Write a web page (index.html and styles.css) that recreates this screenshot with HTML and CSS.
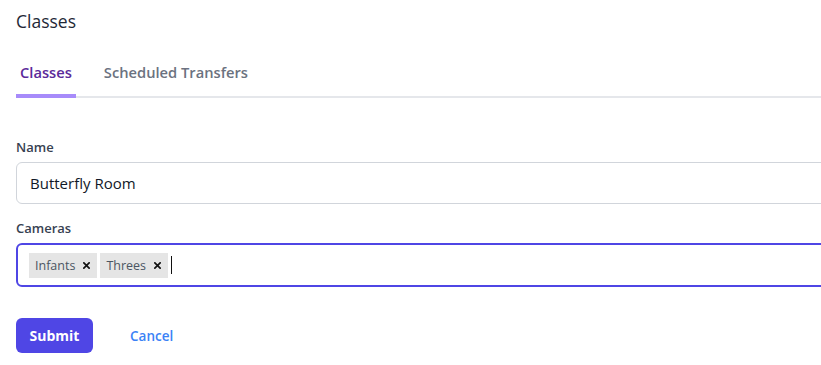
FILE: index.html
```html
<!DOCTYPE html>
<html>
<head>
<meta charset="utf-8">
<link rel="stylesheet" href="styles.css">
</head>
<body>
<div class="page">
  <h1 class="title">Classes</h1>
  <nav class="tabs">
    <a class="tab active">Classes</a>
    <a class="tab">Scheduled Transfers</a>
  </nav>
  <form class="form">
    <div class="field">
      <label class="label">Name</label>
      <div class="input">Butterfly Room</div>
    </div>
    <div class="field">
      <label class="label">Cameras</label>
      <div class="input multi">
        <span class="chip">Infants <svg class="x" viewBox="0 0 8 8" width="8" height="8"><path d="M1 1L7 7M7 1L1 7" stroke="#111" stroke-width="1.9" stroke-linecap="square"/></svg></span>
        <span class="chip">Threes <svg class="x" viewBox="0 0 8 8" width="8" height="8"><path d="M1 1L7 7M7 1L1 7" stroke="#111" stroke-width="1.9" stroke-linecap="square"/></svg></span>
        <span class="caret"></span>
      </div>
    </div>
    <div class="actions">
      <button type="button" class="submit">Submit</button>
      <a class="cancel">Cancel</a>
    </div>
  </form>
</div>
</body>
</html>
```
FILE: styles.css
```css
html, body { margin: 0; padding: 0; overflow: hidden; background: #fff; }
body { font-family: "Open Sans", "Noto Sans", sans-serif; color: #1f2937; }
.page { width: 1100px; padding: 8px 16px 0; }
.title { margin: 0; font-size: 17.5px; font-weight: 500; line-height: 26px; color: #1f2937; }
.tabs { display: flex; gap: 24px; margin-top: 27px; border-bottom: 2px solid #e5e7eb; }
.tab { display: block; padding: 0 4px 11px; font-size: 14.7px; font-weight: 600; line-height: 22px; color: #6b7280; margin-bottom: -2px; border-bottom: 4px solid transparent; }
.tab.active { color: #5b2a9a; border-bottom-color: #a78bfa; }
.form { margin-top: 40px; display: flex; flex-direction: column; }
.field { display: flex; flex-direction: column; margin-bottom: 15px; }
.label { font-size: 13px; font-weight: 600; color: #374151; line-height: 18px; margin-bottom: 6px; }
.input { box-sizing: border-box; height: 42px; border: 1px solid #d1d5db; border-radius: 6px; padding: 0 13px; display: flex; align-items: center; font-size: 15px; color: #111827; }
.input.multi { height: 44px; border: 2px solid #4f46e5; padding: 0 11px; gap: 3px; }
.chip { background: #e5e5e5; font-size: 12.5px; color: #4b5563; padding: 0 7px 0 6px; height: 25px; display: flex; align-items: center; gap: 8px; }
.x { display: block; width: 7px; height: 7px; }
.caret { width: 1px; height: 18px; background: #111; margin-left: 0; }
.actions { display: flex; align-items: center; gap: 37px; margin-top: 16px; }
.submit { font-family: inherit; border: none; background: #4f46e5; color: #fff; font-size: 14px; font-weight: 700; border-radius: 6px; width: 77px; height: 35px; }
.cancel { font-size: 13.5px; font-weight: 600; color: #3b82f6; }
```
